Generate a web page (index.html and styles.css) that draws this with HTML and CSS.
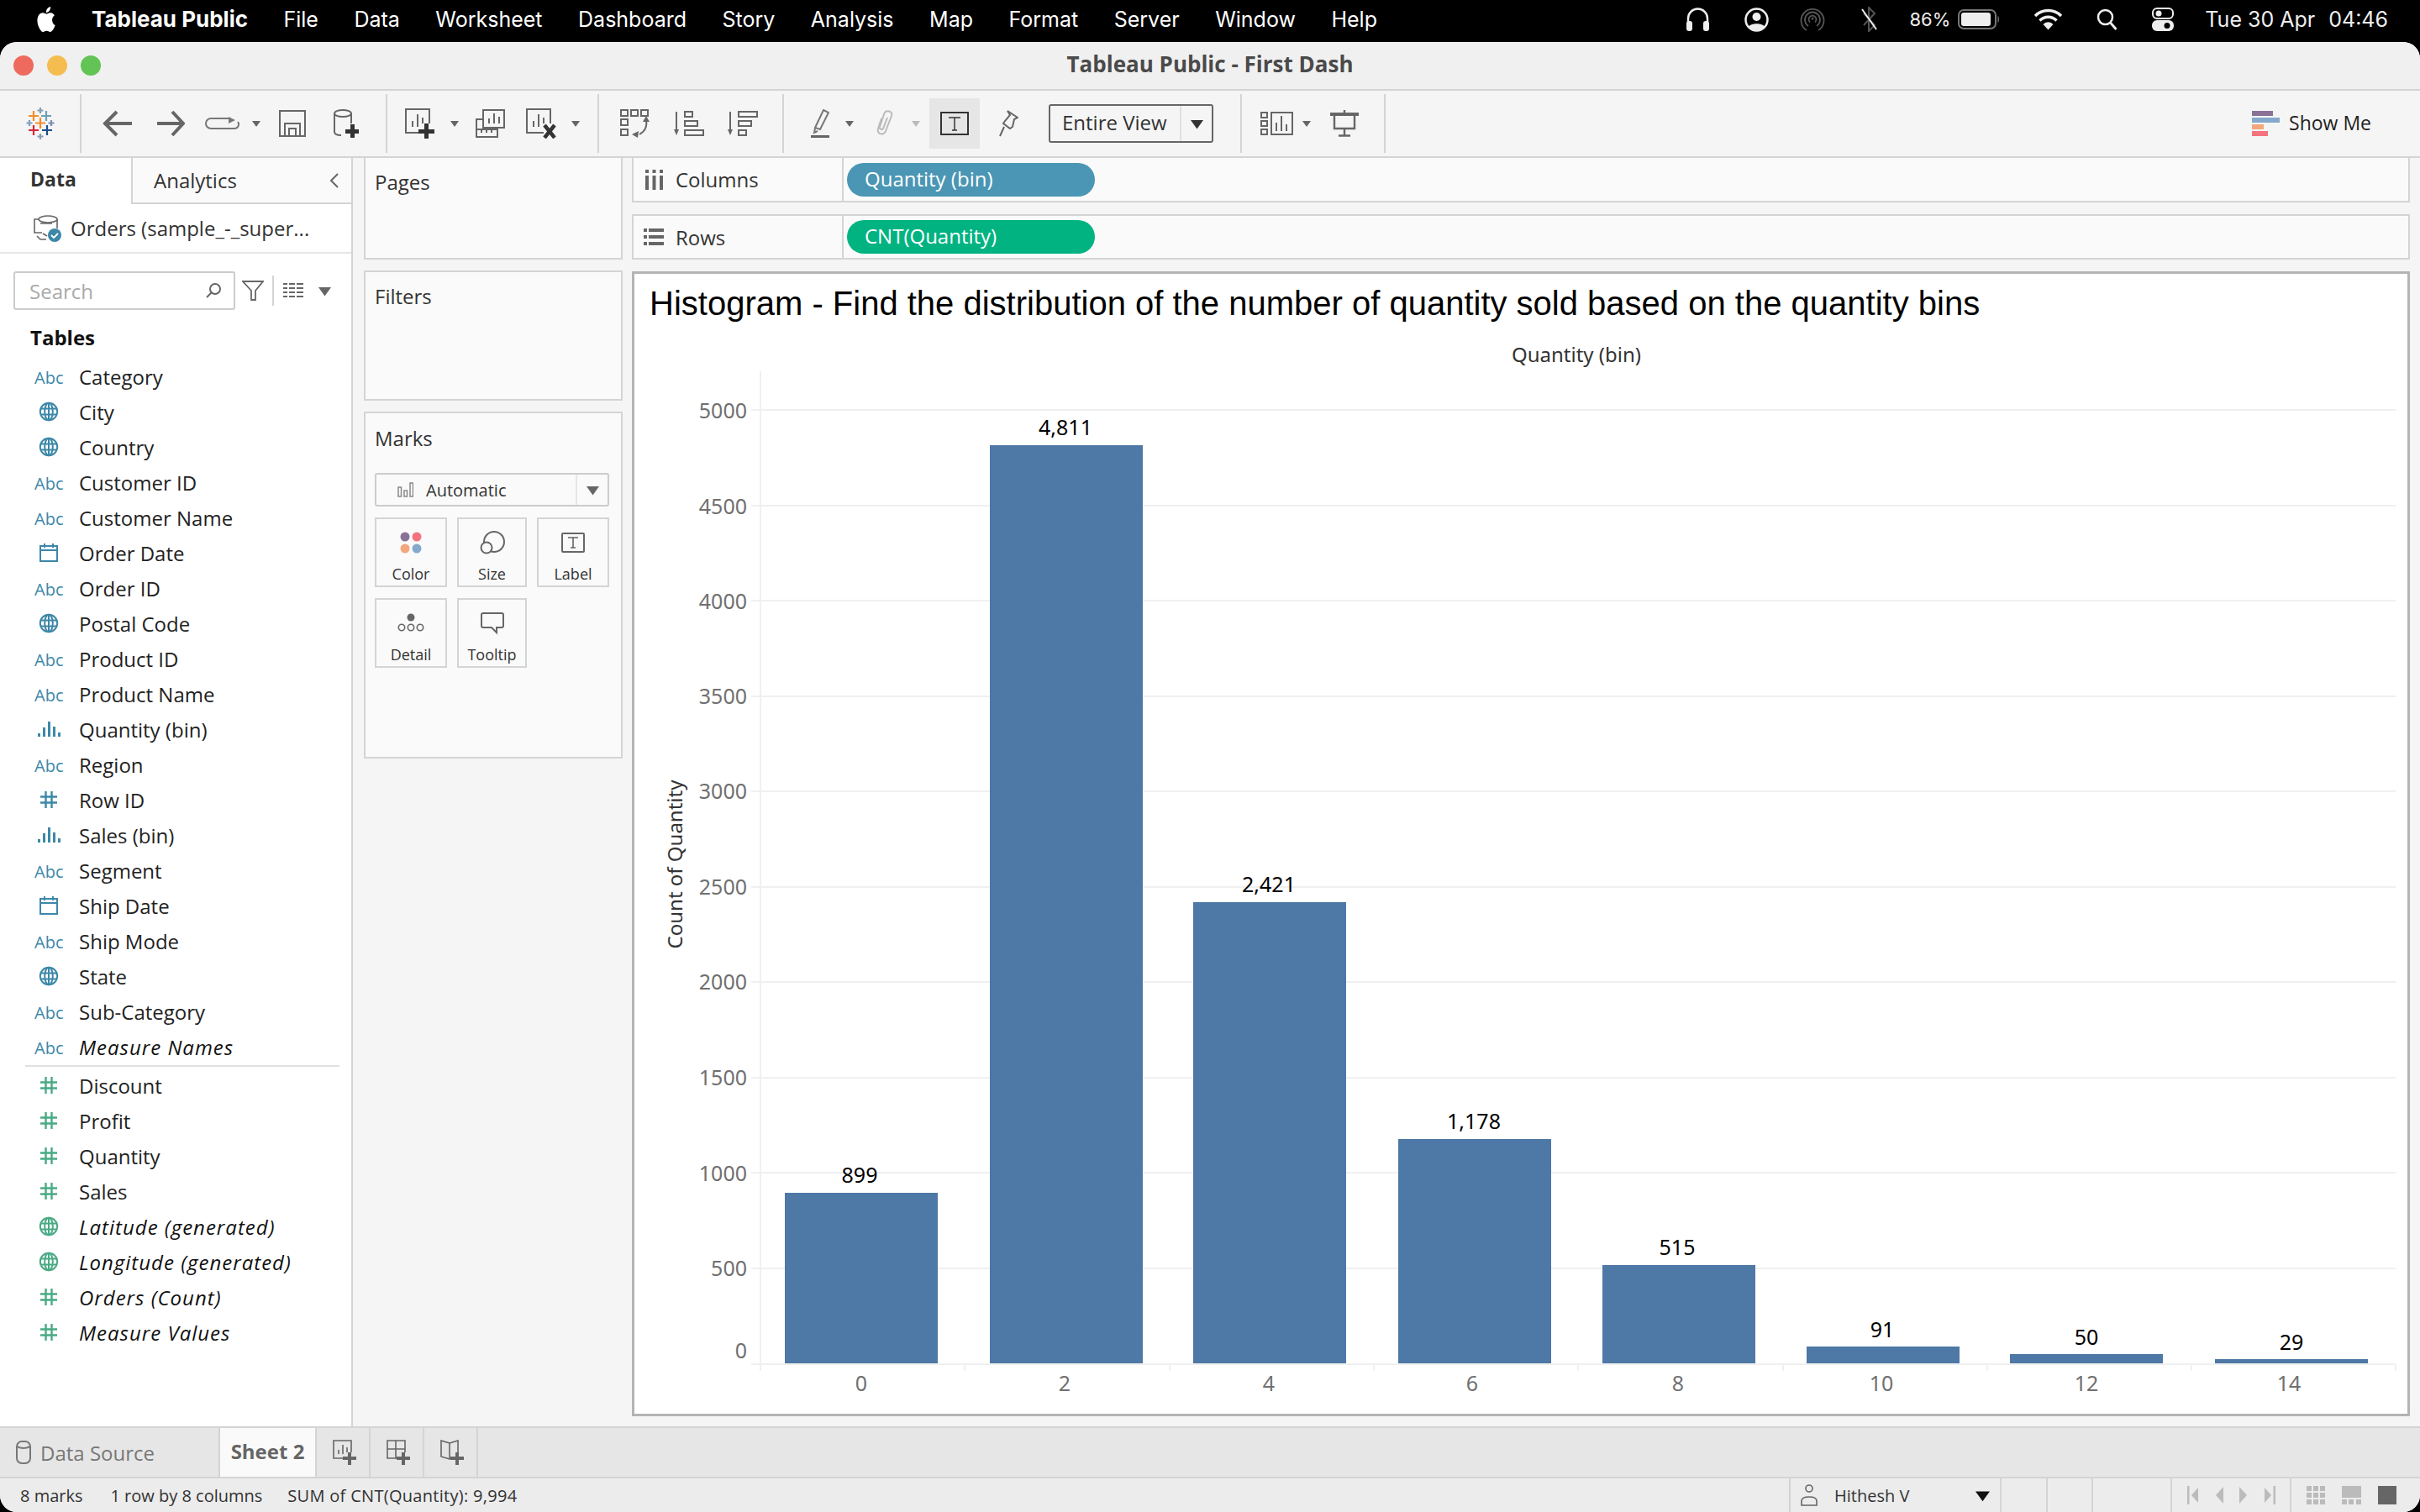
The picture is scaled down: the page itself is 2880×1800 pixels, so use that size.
FILE: index.html
```html
<!DOCTYPE html>
<html lang="en">
<head>
	<meta charset="utf-8" />
	<title>Tableau Public - First Dash</title>
	<link rel="stylesheet" href="styles.css">
</head>
<body>
	<svg class="defs" width="0" height="0">
		<symbol id="globe" viewBox="0 0 24 24"><g fill="none" stroke="currentColor" stroke-width="2"><circle cx="12" cy="12" r="10.2"/><ellipse cx="12" cy="12" rx="4.8" ry="10.2"/><path d="M2 8.500h20M2 15.500h20M12 2v20"/></g></symbol>
		<symbol id="cal" viewBox="0 0 24 24"><g fill="none" stroke="currentColor" stroke-width="2"><rect x="2" y="4" width="20" height="18"/><path d="M2 9h20M7 1v5M17 1v5"/></g></symbol>
		<symbol id="hash" viewBox="0 0 24 24"><path d="M8.500 2v20M15.500 2v20M2 8.500h20M2 15.500h20" fill="none" stroke="currentColor" stroke-width="2.400"/></symbol>
		<symbol id="bins" viewBox="0 0 28 24"><path d="M1 17h3v4H1zM7 10h3v11H7zM13 3h3v18h-3zM19 9h3v12h-3zM25 16h3v5h-3z" fill="currentColor"/></symbol>
		<symbol id="caret" viewBox="0 0 10 10"><path d="M0 2h10L5 9z" fill="currentColor"/></symbol>
	</svg>

	<header class="menubar">
		<svg class="apple" width="26" height="30" viewBox="0 0 24 24" preserveAspectRatio="none"><path fill="#fff" d="M12.152 6.896c-.948 0-2.415-1.078-3.96-1.04-2.04.027-3.91 1.183-4.961 3.014-2.117 3.675-.546 9.103 1.519 12.09 1.013 1.454 2.208 3.09 3.792 3.039 1.52-.065 2.09-.987 3.935-.987 1.831 0 2.35.987 3.96.948 1.637-.026 2.676-1.48 3.676-2.948 1.156-1.688 1.636-3.325 1.662-3.415-.039-.013-3.182-1.221-3.22-4.857-.026-3.04 2.48-4.494 2.597-4.559-1.429-2.09-3.623-2.324-4.39-2.376-2-.156-3.675 1.09-4.61 1.09zM15.53 3.83c.843-1.012 1.4-2.427 1.245-3.83-1.207.052-2.662.805-3.532 1.818-.78.896-1.454 2.338-1.273 3.714 1.338.104 2.715-.688 3.559-1.701"/></svg>
		<nav class="menus">
			<b>Tableau Public</b><span>File</span><span>Data</span><span>Worksheet</span><span>Dashboard</span><span>Story</span><span>Analysis</span><span>Map</span><span>Format</span><span>Server</span><span>Window</span><span>Help</span>
		</nav>
		<div class="tray">
			<svg class="tr-head" width="29" height="30" viewBox="0 0 29 30"><path d="M3 20v-6a11.500 11.500 0 0 1 23 0v6" fill="none" stroke="#eee" stroke-width="2.500"/><rect x="1" y="17" width="7" height="12" rx="3" fill="#eee"/><rect x="21" y="17" width="7" height="12" rx="3" fill="#eee"/></svg>
			<svg class="tr-user" width="29" height="29" viewBox="0 0 29 29"><circle cx="14.500" cy="14.500" r="13" fill="none" stroke="#eee" stroke-width="2.500"/><circle cx="14.500" cy="11" r="5" fill="#eee"/><path d="M5 23c2-5 17-5 19 0-5 5-14 5-19 0z" fill="#eee"/></svg>
			<svg class="tr-air" width="30" height="30" viewBox="0 0 30 30"><g fill="none" stroke="#555" stroke-width="1.800"><path d="M8 28a13.500 13.500 0 1 1 14 0"/><path d="M10 23a9 9 0 1 1 10 0"/><path d="M12 18.500a4.500 4.500 0 1 1 6 0"/></g><circle cx="15" cy="14" r="1.500" fill="#555"/></svg>
			<svg class="tr-bt" width="21" height="30" viewBox="0 0 21 30"><path d="M4 8l13 14-7 7V1l7 7L4 22" fill="none" stroke="#555" stroke-width="2"/><path d="M2 3l17 24" stroke="#eee" stroke-width="2"/></svg>
			<span class="tr-pct">86%</span>
			<svg class="tr-batt" width="50" height="24" viewBox="0 0 50 24"><rect x="1" y="1" width="44" height="22" rx="6" fill="none" stroke="#777" stroke-width="2"/><rect x="4" y="4" width="35" height="16" rx="3" fill="#eee"/><path d="M47.500 8c2 1 2 7 0 8z" fill="#777"/></svg>
			<svg class="tr-wifi" width="35" height="26" viewBox="0 0 35 26"><path d="M2 9a22 22 0 0 1 31 0M7.500 14.500a14 14 0 0 1 20 0" fill="none" stroke="#eee" stroke-width="3.500"/><path d="M11.500 19a8 8 0 0 1 12 0L17.500 25.500z" fill="#eee"/></svg>
			<svg class="tr-find" width="25" height="26" viewBox="0 0 25 26"><circle cx="10.500" cy="10.500" r="8.500" fill="none" stroke="#eee" stroke-width="2.500"/><path d="M16.500 17l7 8" stroke="#eee" stroke-width="2.800"/></svg>
			<svg class="tr-ctl" width="26" height="28" viewBox="0 0 26 28"><rect x="1" y="1" width="24" height="12" rx="5" fill="none" stroke="#eee" stroke-width="2"/><circle cx="8" cy="7" r="3.500" fill="#eee"/><rect y="15" width="26" height="13" rx="6" fill="#eee"/><circle cx="18" cy="21.500" r="3.500" fill="#000"/></svg>
			<span class="tr-date">Tue 30 Apr</span>
			<span class="tr-time">04:46</span>
		</div>
	</header>

	<div class="window">
		<div class="titlebar">
			<i class="light l-red"></i><i class="light l-yellow"></i><i class="light l-green"></i>
			<div class="title">Tableau Public - First Dash</div>
		</div>

		<div class="toolbar">
			<svg class="t-logo" width="40" height="40" viewBox="0 0 40 40"><g fill="none" stroke-width="2.200"><path d="M12 5v12M6 11h12" stroke="#f28e2b"/><path d="M27 5v12M21 11h12" stroke="#6e9fb5"/><path d="M20 1v7M16.500 4.500h7" stroke="#8a9db8"/><path d="M7 16v7M3.500 19.500h7" stroke="#7ba3c4"/><path d="M20 13v13M14 19.500h12" stroke="#f28e2b"/><path d="M33 16v7M29.500 19.500h7" stroke="#7a8fb8"/><path d="M12 22v12M6 28h12" stroke="#d6263c"/><path d="M28 22v12M22 28h12" stroke="#1f4e8c"/><path d="M20 32v7M16.500 35.500h7" stroke="#8a9db8"/></g></svg>
			<i class="sep s1"></i>
			<svg class="t-back" width="35" height="32" viewBox="0 0 35 32"><path d="M17 2L3 16l14 14M3 16h32" fill="none" stroke="#666" stroke-width="4"/></svg>
			<svg class="t-fwd" width="33" height="32" viewBox="0 0 33 32"><path d="M18 2l13 14-13 14M31 16H0" fill="none" stroke="#666" stroke-width="4"/></svg>
			<svg class="t-redo" width="41" height="16" viewBox="0 0 41 16"><path d="M28 2H7a5.500 5.500 0 0 0 0 12h28a5 5 0 0 0 4-8" fill="none" stroke="#777" stroke-width="2"/><path d="M28 0l8 4-8 4z" fill="#777"/></svg>
			<svg class="t-c1 t-caret" width="10" height="10"><use href="#caret"/></svg>
			<svg class="t-save" width="32" height="32" viewBox="0 0 32 32"><path d="M1 1h30v30H1zM7 31V16h18v15M12 31v-9h8v9" fill="none" stroke="#666" stroke-width="2"/></svg>
			<svg class="t-db" width="30" height="34" viewBox="0 0 30 34"><g fill="none" stroke="#666" stroke-width="2"><ellipse cx="11" cy="5" rx="10" ry="4"/><path d="M1 5v22q0 4 8 4M21 5v12"/></g><path d="M20 18h5v6h5v5h-5v5h-5v-5h-6v-5h6z" fill="#333"/></svg>
			<i class="sep s2"></i>
			<svg class="t-new" width="37" height="36" viewBox="0 0 37 36"><g fill="none" stroke="#666" stroke-width="2"><path d="M21 29H1V1h28v17"/><path d="M9 22v-7M15 22V7M21 18v-7"/></g><path d="M23 18h5v7h7v5h-7v6h-5v-6h-7v-5h7z" fill="#333"/></svg>
			<svg class="t-c2 t-caret" width="10" height="10"><use href="#caret"/></svg>
			<svg class="t-dup" width="35" height="34" viewBox="0 0 35 34"><g fill="none" stroke="#666" stroke-width="2"><rect x="9" y="1" width="25" height="21"/><path d="M16 17v-6M22 17V5M28 17v-8"/><path d="M9 12H1v21h25v-9H1M7 28v-4M13 28v-4M19 28v-4"/></g></svg>
			<svg class="t-clear" width="37" height="36" viewBox="0 0 37 36"><g fill="none" stroke="#666" stroke-width="2"><path d="M21 29H1V1h28v17"/><path d="M9 22v-7M15 22V7M21 18v-7"/></g><path d="M22 20l12 15M34 20L22 35" stroke="#333" stroke-width="4.500"/></svg>
			<svg class="t-c3 t-caret" width="10" height="10"><use href="#caret"/></svg>
			<i class="sep s3"></i>
			<svg class="t-swap" width="35" height="34" viewBox="0 0 35 34"><g fill="none" stroke="#666" stroke-width="2"><rect x="1" y="1" width="8" height="7"/><rect x="13" y="1" width="8" height="7"/><rect x="25" y="1" width="8" height="7"/><rect x="1" y="12" width="8" height="7"/><rect x="1" y="24" width="8" height="7"/><path d="M31 14q2 10-8 16"/></g><path d="M31 8l4 7h-8zM14 30l8-4-1 8z" fill="#666"/></svg>
			<svg class="t-sorta" width="36" height="30" viewBox="0 0 36 30"><g fill="none" stroke="#666" stroke-width="2"><path d="M3 1v24"/><rect x="13" y="1" width="9" height="6"/><rect x="13" y="12" width="15" height="6"/><rect x="13" y="23" width="22" height="6"/></g><path d="M0 22h6l-3 7z" fill="#666"/></svg>
			<svg class="t-sortd" width="36" height="30" viewBox="0 0 36 30"><g fill="none" stroke="#666" stroke-width="2"><path d="M3 1v24"/><rect x="13" y="1" width="22" height="6"/><rect x="13" y="12" width="15" height="6"/><rect x="13" y="23" width="9" height="6"/></g><path d="M0 22h6l-3 7z" fill="#666"/></svg>
			<i class="sep s4"></i>
			<svg class="t-pen" width="22" height="34" viewBox="0 0 22 34"><path d="M15 1l6 3-10 20-6-2z" fill="none" stroke="#777" stroke-width="2"/><path d="M5 23l-1 5 4-2" fill="none" stroke="#777" stroke-width="2"/><path d="M0 31h22v3H0z" fill="#666"/></svg>
			<svg class="t-c4 t-caret" width="10" height="10"><use href="#caret"/></svg>
			<svg class="t-clip" width="24" height="32" viewBox="0 0 24 32"><path d="M8 10l-4 12c-2 7 7 9 9 3l7-18c2-6-7-8-9-2L6 20c-1 3 3 4 4 2l5-13" fill="none" stroke="#bbb" stroke-width="2"/></svg>
			<svg class="t-c5 t-caret t-off" width="10" height="10"><use href="#caret"/></svg>
			<div class="t-text"><svg width="34" height="28" viewBox="0 0 34 28"><rect x="1" y="1" width="32" height="26" fill="none" stroke="#333" stroke-width="2"/><path d="M10 7h14M17 7v15M14 22h6" fill="none" stroke="#333" stroke-width="1.500"/></svg></div>
			<svg class="t-pin" width="25" height="32" viewBox="0 0 25 32"><path d="M12 1l12 8-4 2-2 9-3 2-8-6 2-3 6-7zM8 20l-5 11" fill="none" stroke="#666" stroke-width="2"/></svg>
			<div class="fit"><span class="fit-name">Entire View</span><span class="fit-arrow"><svg width="15" height="15"><use href="#caret"/></svg></span></div>
			<i class="sep s5"></i>
			<svg class="t-card" width="39" height="28" viewBox="0 0 39 28"><g fill="none" stroke="#666" stroke-width="2"><rect x="1" y="1" width="7" height="6"/><rect x="1" y="11" width="7" height="6"/><rect x="1" y="21" width="7" height="6"/><rect x="13" y="1" width="25" height="26"/><path d="M19 23V13M25 23V5M31 23v-8"/></g></svg>
			<svg class="t-c6 t-caret" width="10" height="10"><use href="#caret"/></svg>
			<svg class="t-pres" width="34" height="32" viewBox="0 0 34 32"><path d="M5 5v17h24V5M17 0v3M17 22v9M10 30.500h14" fill="none" stroke="#666" stroke-width="2.400"/><path d="M0 3h34v4H0z" fill="#666"/></svg>
			<i class="sep s6"></i>
			<div class="showme">
				<svg width="33" height="30" viewBox="0 0 33 30"><path fill="#8a7296" d="M0 0h25v6H0z"/><path fill="#85a8cc" d="M0 8h33v6H0z"/><path fill="#f2a77c" d="M0 16h14v6H0z"/><path fill="#f5727f" d="M0 24h19v6H0z"/></svg>
				<span>Show Me</span>
			</div>
		</div>

		<main class="main">
			<aside class="data">
				<div class="tabs">
					<div class="tab-data">Data</div>
					<div class="tab-ana">Analytics<svg width="12" height="20" viewBox="0 0 12 20"><path d="M10 2L2 10l8 8" fill="none" stroke="#666" stroke-width="2"/></svg></div>
				</div>
				<div class="source">
					<svg width="33" height="32" viewBox="0 0 33 32"><g fill="none" stroke="#666" stroke-width="1.600"><ellipse cx="17" cy="5" rx="11" ry="4"/><path d="M28 5v11M6 5H1v16h9M8 10h14M4 25l4 4h7M11 22l5 3"/></g><circle cx="25" cy="24" r="8" fill="#3d88a8"/><path d="M21 24l3 3 5-5" fill="none" stroke="#fff" stroke-width="1.800"/></svg>
					<span>Orders (sample_-_super...</span>
				</div>
				<div class="search-row">
					<div class="search"><span>Search</span><svg width="20" height="20" viewBox="0 0 20 20"><circle cx="12" cy="8" r="6" fill="none" stroke="#666" stroke-width="2"/><path d="M8 12l-6 6" stroke="#666" stroke-width="2"/></svg></div>
					<svg class="s-filter" width="26" height="24" viewBox="0 0 26 24"><path d="M1 1h24L16 12v11h-5V12z" fill="none" stroke="#666" stroke-width="1.800"/></svg>
					<i class="s-div"></i>
					<svg class="s-list" width="24" height="18" viewBox="0 0 24 18"><path d="M0 1h5M7 1h7M16 1h8M0 6h5M7 6h7M16 6h8M0 11h5M7 11h7M16 11h8M0 16h5M7 16h7M16 16h8" stroke="#666" stroke-width="2"/></svg>
					<svg class="s-caret" width="15" height="15"><use href="#caret"/></svg>
				</div>
				<h2 class="tables">Tables</h2>
				<ul class="fields">
					<li><span class="abc">Abc</span>Category</li>
					<li><svg class="ic blue"><use href="#globe"/></svg>City</li>
					<li><svg class="ic blue"><use href="#globe"/></svg>Country</li>
					<li><span class="abc">Abc</span>Customer ID</li>
					<li><span class="abc">Abc</span>Customer Name</li>
					<li><svg class="ic blue"><use href="#cal"/></svg>Order Date</li>
					<li><span class="abc">Abc</span>Order ID</li>
					<li><svg class="ic blue"><use href="#globe"/></svg>Postal Code</li>
					<li><span class="abc">Abc</span>Product ID</li>
					<li><span class="abc">Abc</span>Product Name</li>
					<li><svg class="ic ic-bins blue"><use href="#bins"/></svg>Quantity (bin)</li>
					<li><span class="abc">Abc</span>Region</li>
					<li><svg class="ic blue"><use href="#hash"/></svg>Row ID</li>
					<li><svg class="ic ic-bins blue"><use href="#bins"/></svg>Sales (bin)</li>
					<li><span class="abc">Abc</span>Segment</li>
					<li><svg class="ic blue"><use href="#cal"/></svg>Ship Date</li>
					<li><span class="abc">Abc</span>Ship Mode</li>
					<li><svg class="ic blue"><use href="#globe"/></svg>State</li>
					<li><span class="abc">Abc</span>Sub-Category</li>
					<li class="gen"><span class="abc">Abc</span>Measure Names</li>
					<li class="rule"></li>
					<li><svg class="ic green"><use href="#hash"/></svg>Discount</li>
					<li><svg class="ic green"><use href="#hash"/></svg>Profit</li>
					<li><svg class="ic green"><use href="#hash"/></svg>Quantity</li>
					<li><svg class="ic green"><use href="#hash"/></svg>Sales</li>
					<li class="gen"><svg class="ic green"><use href="#globe"/></svg>Latitude (generated)</li>
					<li class="gen"><svg class="ic green"><use href="#globe"/></svg>Longitude (generated)</li>
					<li class="gen"><svg class="ic green"><use href="#hash"/></svg>Orders (Count)</li>
					<li class="gen"><svg class="ic green"><use href="#hash"/></svg>Measure Values</li>
				</ul>
			</aside>

			<section class="cards">
				<div class="card pages">Pages</div>
				<div class="card filters">Filters</div>
				<div class="card marks">
					<div>Marks</div>
					<div class="mark-type">
						<svg width="19" height="18" viewBox="0 0 19 18"><g fill="none" stroke="#888" stroke-width="1.500"><rect x="1" y="6" width="3.500" height="11"/><rect x="8" y="10" width="3.500" height="7"/><rect x="15" y="1" width="3.500" height="16"/></g></svg>
						<span class="mark-name">Automatic</span>
						<span class="mark-arrow"><svg width="15" height="15"><use href="#caret"/></svg></span>
					</div>
					<div class="mark-grid">
						<div class="mark-btn">
							<svg width="26" height="26" viewBox="0 0 26 26"><circle cx="6" cy="6" r="5.500" fill="#8a7296"/><circle cx="20" cy="6" r="5.500" fill="#f5727f"/><circle cx="6" cy="20" r="5.500" fill="#f2a77c"/><circle cx="20" cy="20" r="5.500" fill="#85a8cc"/></svg>
							<span>Color</span>
						</div>
						<div class="mark-btn">
							<svg width="30" height="28" viewBox="0 0 30 28"><g fill="none" stroke="#666" stroke-width="2"><circle cx="17" cy="13" r="12"/><circle cx="8" cy="20" r="6.500" fill="#fafafa"/></g></svg>
							<span>Size</span>
						</div>
						<div class="mark-btn">
							<svg width="28" height="24" viewBox="0 0 28 24"><rect x="1" y="1" width="26" height="22" rx="1" fill="none" stroke="#666" stroke-width="2"/><path d="M8 6h12M14 6v12M11 18h6" fill="none" stroke="#666" stroke-width="1.600"/></svg>
							<span>Label</span>
						</div>
						<div class="mark-btn">
							<svg width="32" height="24" viewBox="0 0 32 24"><circle cx="16" cy="5" r="4.500" fill="#666"/><g fill="none" stroke="#666" stroke-width="1.600"><circle cx="5" cy="17" r="3.700"/><circle cx="16" cy="17" r="3.700"/><circle cx="27" cy="17" r="3.700"/></g></svg>
							<span>Detail</span>
						</div>
						<div class="mark-btn">
							<svg width="28" height="26" viewBox="0 0 28 26"><path d="M3 1h22a2 2 0 0 1 2 2v13a2 2 0 0 1-2 2h-6v6l-6-6H3a2 2 0 0 1-2-2V3a2 2 0 0 1 2-2z" fill="none" stroke="#666" stroke-width="2"/></svg>
							<span>Tooltip</span>
						</div>
					</div>
				</div>
			</section>

			<section class="view">
				<div class="shelf">
					<div class="shelf-name"><svg width="21" height="24" viewBox="0 0 21 24"><path d="M0 0h4v4H0zM8.500 0h4v4h-4zM17 0h4v4h-4zM0 7h4v17H0zM8.500 7h4v17h-4zM17 7h4v17h-4z" fill="#666"/></svg>Columns</div>
					<div class="pill blue-pill">Quantity (bin)</div>
				</div>
				<div class="shelf">
					<div class="shelf-name"><svg class="rows-ico" width="24" height="20" viewBox="0 0 24 20"><path d="M0 0h4v4H0zM6 0h18v4H6zM0 8h4v4H0zM6 8h18v4H6zM0 16h4v4H0zM6 16h18v4H6z" fill="#666"/></svg>Rows</div>
					<div class="pill green-pill">CNT(Quantity)</div>
				</div>
				<div class="sheet">
					<h1 class="sheet-title">Histogram - Find the distribution of the number of quantity sold based on the quantity bins</h1>
					<svg class="chart" width="2110" height="1283" viewBox="755 400 2110 1283">
						<g class="grid">
							<path d="M905 442V1632"/>
							<path d="M894 488H2851M894 602H2851M894 715H2851M894 829H2851M894 942H2851M894 1056H2851M894 1169H2851M894 1283H2851M894 1396H2851M894 1510H2851M894 1624H2851"/>
							<path d="M1148 1624v8M1392 1624v8M1635 1624v8M1878 1624v8M2122 1624v8M2365 1624v8M2608 1624v8M2851 1624v8"/>
						</g>
						<text class="ax-title" x="1876" y="431">Quantity (bin)</text>
						<text class="ax-title" transform="translate(812 1029) rotate(-90)">Count of Quantity</text>
						<g class="ticks-y">
							<text x="889" y="498">5000</text><text x="889" y="612">4500</text><text x="889" y="725">4000</text><text x="889" y="838">3500</text><text x="889" y="951">3000</text><text x="889" y="1065">2500</text><text x="889" y="1178">2000</text><text x="889" y="1292">1500</text><text x="889" y="1406">1000</text><text x="889" y="1519">500</text><text x="889" y="1617">0</text>
						</g>
						<g class="bars">
							<rect x="934" y="1420" width="182" height="203"/><rect x="1178" y="530" width="182" height="1093"/><rect x="1420" y="1074" width="182" height="549"/><rect x="1664" y="1356" width="182" height="267"/><rect x="1907" y="1506" width="182" height="117"/><rect x="2150" y="1603" width="182" height="20"/><rect x="2392" y="1612" width="182" height="11"/><rect x="2636" y="1618" width="182" height="5"/>
						</g>
						<g class="vals">
							<text x="1023" y="1408">899</text><text x="1268" y="518">4,811</text><text x="1510" y="1062">2,421</text><text x="1754" y="1344">1,178</text><text x="1996" y="1494">515</text><text x="2240" y="1592">91</text><text x="2483" y="1601">50</text><text x="2727" y="1607">29</text>
						</g>
						<g class="ticks-x">
							<text x="1025" y="1656">0</text><text x="1267" y="1656">2</text><text x="1510" y="1656">4</text><text x="1752" y="1656">6</text><text x="1997" y="1656">8</text><text x="2239" y="1656">10</text><text x="2483" y="1656">12</text><text x="2724" y="1656">14</text>
						</g>
					</svg>
				</div>
			</section>
		</main>

		<div class="sheetbar">
			<div class="ds-tab">
				<svg width="18" height="28" viewBox="0 0 18 28"><g fill="none" stroke="#777" stroke-width="2"><rect x="1" y="1" width="16" height="26" rx="6"/><path d="M1 7q8 4 16 0"/></g></svg>
				<span>Data Source</span>
			</div>
			<div class="sheet-tab">Sheet 2</div>
			<div class="add-tab">
				<svg width="30" height="30" viewBox="0 0 30 30"><g fill="none" stroke="#666" stroke-width="1.600"><path d="M17 22H1V1h21v14"/><path d="M7 17v-5M12 17V6M17 15V9"/></g><path d="M18 15h4v5h6v4h-6v6h-4v-6h-6v-4h6z" fill="#666"/></svg>
			</div>
			<div class="add-tab">
				<svg width="30" height="30" viewBox="0 0 30 30"><g fill="none" stroke="#666" stroke-width="1.600"><path d="M17 22H1V1h21v14M1 11h21M11 1v21"/></g><path d="M18 15h4v5h6v4h-6v6h-4v-6h-6v-4h6z" fill="#666"/></svg>
			</div>
			<div class="add-tab">
				<svg width="30" height="30" viewBox="0 0 30 30"><g fill="none" stroke="#666" stroke-width="1.600"><path d="M11 4L1 1v19l10 3 6-1M11 4l10-3v14M11 4v19"/></g><path d="M18 15h4v5h6v4h-6v6h-4v-6h-6v-4h6z" fill="#666"/></svg>
			</div>
		</div>

		<footer class="status">
			<span class="st-marks">8 marks</span>
			<span class="st-rows">1 row by 8 columns</span>
			<span class="st-sum">SUM of CNT(Quantity): 9,994</span>
			<div class="st-user">
				<svg width="20" height="26" viewBox="0 0 20 26"><g fill="none" stroke="#666" stroke-width="1.600"><circle cx="10" cy="5" r="4"/><path d="M1 25v-5q0-5 9-5t9 5v5z"/></g></svg>
				<span>Hithesh V</span>
				<svg class="st-caret" width="17" height="17"><use href="#caret"/></svg>
			</div>
			<i class="st-cell st-a"></i><i class="st-cell st-b"></i><i class="st-cell st-c"></i>
			<div class="st-cell st-nav">
				<svg width="14" height="22" viewBox="0 0 14 22"><path d="M0 0h2.500v22H0zM13 2v18L5 11z" fill="#bbb"/></svg>
				<svg width="10" height="22" viewBox="0 0 10 22"><path d="M10 1v20L1 11z" fill="#bbb"/></svg>
				<svg width="10" height="22" viewBox="0 0 10 22"><path d="M0 1v20l9-10z" fill="#bbb"/></svg>
				<svg width="14" height="22" viewBox="0 0 14 22"><path d="M11.500 0H14v22h-2.500zM1 2v18l8-9z" fill="#bbb"/></svg>
			</div>
			<div class="st-cell st-views">
				<svg width="22" height="22" viewBox="0 0 22 22"><path d="M0 0h6v6H0zM8 0h6v6H8zM16 0h6v6h-6zM0 8h6v6H0zM8 8h6v6H8zM16 8h6v6h-6zM0 16h6v6H0zM8 16h6v6H8zM16 16h6v6h-6z" fill="#bbb"/></svg>
				<svg width="23" height="22" viewBox="0 0 23 22"><path d="M0 0h23v14H0zM0 16h6v6H0zM8 16h6v6H8zM17 16h6v6h-6z" fill="#bbb"/></svg>
				<svg width="22" height="22" viewBox="0 0 22 22"><path d="M0 0h22v22H0z" fill="#666"/></svg>
			</div>
		</footer>
	</div>
</body>
</html>
```

FILE: styles.css
```css
html, body { margin: 0; height: 100%; }
body {
	background: #000;
	font-family: "Open Sans", sans-serif;
	color: #333;
	overflow: hidden;
}
.defs { position: absolute; }

/* mac menu bar */
.menubar {
	height: 50px;
	box-sizing: border-box;
	padding: 0 0 4px 42px;
	display: flex;
	align-items: center;
	color: #fff;
	font-family: Inter, sans-serif;
	font-size: 25px;
}
.menus { display: flex; margin-left: 41px; gap: 42.500px; }
.menus b { font-weight: 700; font-size: 26px; line-height: 30px; }
.menus span { line-height: 30px; }
.tray { display: flex; align-items: center; margin-left: auto; padding-right: 38px; color: #eee; }
.tr-user { margin-left: 41px; }
.tr-air { margin-left: 37px; }
.tr-bt { margin-left: 42px; }
.tr-pct { margin-left: 37px; font-size: 22px; }
.tr-batt { margin-left: 9px; }
.tr-wifi { margin-left: 40px; }
.tr-find { margin-left: 40px; }
.tr-ctl { margin-left: 41px; }
.tr-date { margin-left: 37px; }
.tr-time { margin-left: 16px; }

.window {
	height: 1750px;
	background: #f5f5f5;
	border-radius: 20px;
	overflow: hidden;
	display: flex;
	flex-direction: column;
}

/* title bar */
.titlebar {
	height: 56px;
	flex: none;
	background: #f0f0f0;
	border-bottom: 2px solid #d4d4d4;
	display: flex;
	align-items: center;
	padding-left: 16px;
	gap: 16px;
	position: relative;
}
.light { width: 24px; height: 24px; border-radius: 50%; }
.l-red { background: #ee6a5f; }
.l-yellow { background: #f5bd4f; }
.l-green { background: #61c454; }
.title {
	position: absolute;
	left: 0;
	right: 0;
	text-align: center;
	font-weight: 700;
	font-size: 26px;
	line-height: 52px;
	top: 0;
	color: #4a4a4a;
}

/* toolbar */
.toolbar {
	height: 78px;
	flex: none;
	display: flex;
	align-items: center;
	border-bottom: 2px solid #d4d4d4;
	color: #666;
}
.toolbar > svg { flex: none; }
.sep { width: 2px; height: 70px; background: #d4d4d4; flex: none; }
.t-logo { margin-left: 28px; }
.s1 { margin-left: 27px; }
.t-back { margin-left: 25px; }
.t-fwd { margin-left: 30px; }
.t-redo { margin-left: 24px; }
.t-c1 { margin-left: 15px; }
.t-save { margin-left: 22px; }
.t-db { margin-left: 33px; }
.s2 { margin-left: 32px; }
.t-new { margin-left: 21px; }
.t-c2 { margin-left: 17px; }
.t-dup { margin-left: 20px; }
.t-clear { margin-left: 25px; }
.t-c3 { margin-left: 17px; }
.s3 { margin-left: 21px; }
.t-swap { margin-left: 25px; }
.t-sorta { margin-left: 29px; }
.t-sortd { margin-left: 28px; }
.s4 { margin-left: 29px; }
.t-pen { margin-left: 32px; }
.t-c4 { margin-left: 19px; }
.t-clip { margin-left: 25px; }
.t-c5 { margin-left: 20px; }
.t-off { color: #bbb; }
.t-text {
	margin-left: 11px;
	width: 60px;
	height: 60px;
	background: #e6e6e6;
	display: flex;
	align-items: center;
	justify-content: center;
}
.t-pin { margin-left: 21px; }
.fit {
	margin-left: 36px;
	width: 196px;
	height: 46px;
	box-sizing: border-box;
	border: 2px solid #666;
	border-radius: 3px;
	display: flex;
	align-items: center;
	font-size: 24px;
	color: #333;
}
.fit-name { flex: 1; padding: 0 0 3px 14px; }
.fit-arrow { width: 36px; height: 100%; border-left: 2px solid #e0e0e0; display: flex; align-items: center; justify-content: center; color: #333; }
.s5 { margin-left: 32px; }
.t-card { margin-left: 22px; }
.t-c6 { margin-left: 11px; }
.t-pres { margin-left: 23px; }
.s6 { margin-left: 30px; }
.showme { margin-left: auto; padding-right: 58px; display: flex; align-items: center; gap: 11px; font-size: 23px; color: #222; }
.showme span { padding-bottom: 3px; }

/* main area */
.main { flex: 1; display: flex; min-height: 0; }

.data {
	width: 420px;
	box-sizing: border-box;
	flex: none;
	background: #fff;
	border-right: 2px solid #d4d4d4;
}
.tabs { display: flex; height: 55px; }
.tab-data { width: 156px; padding-left: 36px; box-sizing: border-box; font-weight: 700; font-size: 23px; line-height: 50px; }
.tab-ana {
	flex: 1;
	box-sizing: border-box;
	background: #fafafa;
	border-left: 2px solid #d4d4d4;
	border-bottom: 2px solid #d4d4d4;
	padding: 0 14px 0 25px;
	font-size: 24px;
	line-height: 50px;
	display: flex;
	align-items: center;
	justify-content: space-between;
}
.source {
	height: 59px;
	box-sizing: border-box;
	border-bottom: 2px solid #e6e6e6;
	display: flex;
	align-items: center;
	padding-left: 40px;
	gap: 11px;
	font-size: 24px;
}
.search-row { display: flex; align-items: center; padding: 21px 0 0 16px; }
.search {
	width: 264px;
	height: 46px;
	box-sizing: border-box;
	border: 2px solid #ccc;
	border-radius: 3px;
	display: flex;
	align-items: center;
	justify-content: space-between;
	padding: 0 14px 0 17px;
	font-size: 24px;
	color: #aaa;
}
.s-filter { margin-left: 8px; }
.s-div { width: 2px; height: 36px; background: #d4d4d4; margin-left: 10px; }
.s-list { margin-left: 11px; }
.s-caret { margin-left: 18px; color: #666; }
.tables { margin: 17px 0 0 36px; font-size: 24px; line-height: 32px; color: #111; }
.fields { list-style: none; margin: 9px 0 0; padding: 0; font-size: 24px; color: #222; }
.fields li { height: 42px; display: flex; align-items: center; }
.fields .rule { height: 2px; background: #e0e0e0; margin: 1px 14px 0 30px; }
.fields .rule + li { margin-top: 1px; }
.gen { font-style: italic; letter-spacing: 1px; color: #111; }
.abc { flex: none; font-style: normal; letter-spacing: 0; font-size: 20px; color: #3d88a8; padding-left: 41px; box-sizing: border-box; width: 94px; margin-top: 3px; }
.ic { flex: none; width: 24px; height: 24px; margin: 0 24px 0 46px; }
.ic-bins { width: 28px; margin: 0 22px 0 44px; }
.blue { color: #3d88a8; }
.green { color: #4aaa85; }

.cards {
	width: 332px;
	box-sizing: border-box;
	flex: none;
	padding: 0 11px 0 13px;
	display: flex;
	flex-direction: column;
	gap: 13px;
}
.card {
	box-sizing: border-box;
	background: #fafafa;
	border: 2px solid #d4d4d4;
	padding: 12px 11px;
	font-size: 24px;
}
.pages { height: 121px; border-top: 0; }
.filters { height: 155px; }
.marks { height: 413px; padding-top: 13px; }
.mark-type {
	margin-top: 25px;
	height: 40px;
	width: 279px;
	box-sizing: border-box;
	border: 2px solid #ccc;
	border-radius: 3px;
	display: flex;
	align-items: center;
	padding-left: 25px;
	font-size: 20px;
}
.mark-name { flex: 1; margin-left: 15px; }
.mark-arrow { width: 36px; height: 100%; border-left: 2px solid #e6e6e6; display: flex; align-items: center; justify-content: center; color: #666; }
.mark-grid {
	margin-top: 13px;
	display: grid;
	grid-template-columns: 86px 83px 86px;
	grid-auto-rows: 83px;
	gap: 13px 12px;
}
.mark-btn {
	box-sizing: border-box;
	border: 2px solid #d4d4d4;
	display: flex;
	flex-direction: column;
	align-items: center;
	padding-top: 14px;
	font-size: 18px;
}
.mark-btn svg { height: 28px; margin-bottom: 12px; }
.mark-btn span { line-height: 22px; }

.view {
	flex: 1;
	min-width: 0;
	display: flex;
	flex-direction: column;
	gap: 14px;
	padding-right: 12px;
}
.shelf {
	height: 54px;
	flex: none;
	box-sizing: border-box;
	background: #fafafa;
	border: 2px solid #d4d4d4;
	display: flex;
	align-items: center;
}
.shelf:first-child { border-top: 0; height: 53px; }
.shelf-name {
	width: 250px;
	height: 100%;
	box-sizing: border-box;
	border-right: 2px solid #d4d4d4;
	display: flex;
	align-items: center;
	gap: 15px;
	padding-left: 14px;
	font-size: 24px;
}
.rows-ico { margin: 0 -1px 0 -2px; }
.pill {
	width: 295px;
	height: 40px;
	margin-left: 4px;
	border-radius: 20px;
	padding-left: 21px;
	box-sizing: border-box;
	color: #fff;
	font-size: 24px;
	line-height: 38px;
}
.blue-pill { background: #4a96b4; }
.green-pill { background: #02b382; }

.sheet {
	height: 1363px;
	flex: none;
	box-sizing: border-box;
	background: #fff;
	border: 3px solid #b4b4b4;
	display: flex;
	flex-direction: column;
}
.sheet-title {
	margin: 0;
	height: 74px;
	padding-left: 18px;
	box-sizing: border-box;
	font-family: "Liberation Sans", sans-serif;
	font-weight: 400;
	font-size: 40px;
	line-height: 70px;
	color: #000;
	white-space: nowrap;
}
.chart { display: block; flex: none; font-family: "Noto Sans", sans-serif; font-size: 24px; }
.grid path { fill: none; stroke: #f0f0f0; stroke-width: 2; }
.ax-title { text-anchor: middle; fill: #333; font-size: 24px; }
.ticks-y text { text-anchor: end; fill: #707070; font-size: 25px; }
.ticks-x text { text-anchor: middle; fill: #707070; font-size: 25px; }
.bars rect { fill: #4e78a6; }
.vals text { text-anchor: middle; fill: #000; font-size: 25px; }

/* sheet tabs */
.sheetbar {
	height: 60px;
	flex: none;
	box-sizing: border-box;
	background: #e6e6e6;
	border-top: 2px solid #d4d4d4;
	display: flex;
}
.ds-tab { width: 260px; box-sizing: border-box; display: flex; align-items: center; gap: 11px; padding-left: 19px; font-size: 24px; color: #777; }
.sheet-tab {
	width: 117px;
	box-sizing: border-box;
	background: #fafafa;
	border: solid #d4d4d4;
	border-width: 0 2px;
	text-align: center;
	font-weight: 700;
	font-size: 24px;
	line-height: 56px;
	color: #666;
}
.add-tab { width: 64px; box-sizing: border-box; border-right: 2px solid #d4d4d4; display: flex; align-items: center; padding-left: 19px; }

/* status bar */
.status {
	height: 42px;
	flex: none;
	box-sizing: border-box;
	background: #ececec;
	border-top: 2px solid #d4d4d4;
	display: flex;
	align-items: center;
	font-size: 20px;
	color: #333;
}
.st-marks { margin-left: 24px; }
.st-rows { margin-left: 33px; }
.st-sum { margin-left: 30px; letter-spacing: .3px; }
.st-user {
	margin-left: auto;
	width: 253px;
	height: 100%;
	box-sizing: border-box;
	border-left: 2px solid #d4d4d4;
	border-right: 2px solid #d4d4d4;
	display: flex;
	align-items: center;
	gap: 20px;
	padding-left: 12px;
}
.st-caret { margin-left: auto; margin-right: 12px; color: #111; }
.st-cell { height: 100%; box-sizing: border-box; border-right: 2px solid #d4d4d4; display: flex; align-items: center; }
.st-a { width: 55px; }
.st-b { width: 54px; }
.st-c { width: 94px; }
.st-nav { width: 142px; justify-content: center; gap: 19px; }
.st-views { width: 153px; border-right: 0; gap: 20px; padding-left: 18px; }
```
